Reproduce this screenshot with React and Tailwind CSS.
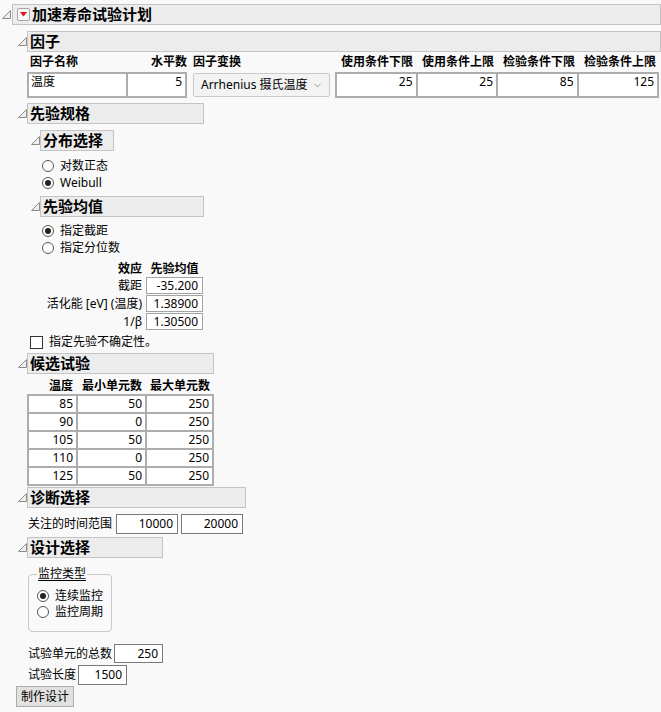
import { ChevronDown } from 'lucide-react'

function Twisty() {
  return (
    <svg width="9" height="9" viewBox="0 0 9 9" className="shrink-0">
      <path d="M8.5 0.5 L8.5 8.5 L0.5 8.5 Z" fill="#eeeeee" stroke="#8c8c8c" strokeWidth="1" strokeLinejoin="round" />
    </svg>
  )
}

function Header({ title, box }) {
  return (
    <div className="flex items-center">
      <Twisty />
      <div className={`h-[21px] ${box} flex items-center border border-[#c4c4c4] bg-[#ececec] pl-[2px] text-[15px] font-bold leading-[19px]`}>
        {title}
      </div>
    </div>
  )
}

function Radio({ checked, label, h = 'h-[17px]' }) {
  return (
    <div className={`flex ${h} items-center gap-[6px]`}>
      <span className="flex h-[12px] w-[12px] items-center justify-center rounded-full border border-[#555] bg-white">
        {checked ? <span className="h-[6px] w-[6px] rounded-full bg-[#222]" /> : null}
      </span>
      <span className="leading-[16px]">{label}</span>
    </div>
  )
}

function Input({ value, className }) {
  return (
    <div className={`flex items-center justify-end bg-white pr-[4px] leading-[16px] ${className}`}>{value}</div>
  )
}

const candidates = [
  [85, 50, 250],
  [90, 0, 250],
  [105, 50, 250],
  [110, 0, 250],
  [125, 50, 250],
]

const limits = [
  ['使用条件下限', 25],
  ['使用条件上限', 25],
  ['检验条件下限', 85],
  ['检验条件上限', 125],
]

export default function App() {
  return (
    <div className="h-[712px] w-[661px] overflow-hidden bg-[#f9f9f9] pt-[4px] font-['Noto_Sans','Noto_Sans_CJK_SC',sans-serif] text-[12px] text-black">
      {/* top outline */}
      <div className="flex items-center pl-[2px]">
        <Twisty />
        <div className="ml-[1px] flex h-[21px] flex-1 items-center border border-[#c4c4c4] bg-[#ececec]">
          <span className="ml-[4px] flex h-[13px] w-[13px] items-center justify-center rounded-[2px] border border-[#a5a5a5] bg-[#f7f7f7]">
            <svg width="7" height="5" viewBox="0 0 7 5">
              <path d="M0 0 L7 0 L3.5 4.5 Z" fill="#e0141e" />
            </svg>
          </span>
          <span className="ml-[2px] text-[15px] font-bold leading-[19px]">加速寿命试验计划</span>
        </div>
      </div>

      <div className="pl-[18px]">
        {/* 因子 */}
        <div className="mt-[6px]">
          <Header title="因子" box="flex-1" />
          <div className="ml-[9px]">
            <div className="flex h-[20px] items-center font-bold leading-[16px]">
              <div className="w-[100px] pl-[3px]">因子名称</div>
              <div className="w-[60px] text-right">水平数</div>
              <div className="w-[6px]" />
              <div className="w-[137px]">因子变换</div>
              <div className="w-[5px]" />
              {limits.map(([t]) => (
                <div key={t} className="w-[81px] text-right pr-[3px]">{t}</div>
              ))}
            </div>
            <div className="flex items-start">
              <div className="flex h-[26px] w-[160px] gap-[2px] bg-[#adadad] p-[2px]">
                <div className="w-[97px] bg-white pl-[2px] leading-[15px]">温度</div>
                <div className="flex-1 bg-white pr-[3px] text-right leading-[15px]">5</div>
              </div>
              <div className="w-[6px]" />
              <div className="mt-[1px] flex h-[24px] w-[137px] items-center justify-between rounded-[2px] border border-[#c9c9c9] bg-[#f3f3f3] pl-[7px] pr-[6px]">
                <span className="leading-[16px]">Arrhenius 摄氏温度</span>
                <ChevronDown size={11} strokeWidth={1.5} color="#777" />
              </div>
              <div className="w-[5px]" />
              <div className="flex h-[26px] w-[324px] gap-[2px] bg-[#adadad] p-[2px]">
                {limits.map(([t, v]) => (
                  <div key={t} className="flex-1 bg-white pr-[3px] text-right leading-[15px]">{v}</div>
                ))}
              </div>
            </div>
          </div>
        </div>

        {/* 先验规格 */}
        <div className="mt-[5px]">
          <Header title="先验规格" box="w-[177px]" />
          <div className="pl-[13px]">
            <div className="mt-[6px]">
              <Header title="分布选择" box="w-[74px]" />
              <div className="mt-[6px] pl-[11px]">
                <Radio label="对数正态" />
                <Radio checked label="Weibull" />
              </div>
            </div>
            <div className="mt-[5px]">
              <Header title="先验均值" box="w-[164px]" />
              <div className="mt-[5px] pl-[11px]">
                <Radio checked label="指定截距" />
                <Radio label="指定分位数" />
              </div>
              <div className="mt-[4px]">
                <div className="flex h-[17px] items-center font-bold leading-[16px]">
                  <div className="w-[111px] text-right">效应</div>
                  <div className="ml-[4px] w-[57px] text-center">先验均值</div>
                </div>
                <div className="flex flex-col gap-[1px]">
                  {[
                    ['截距', '-35.200'],
                    ['活化能 [eV] (温度)', '1.38900'],
                    ['1/β', '1.30500'],
                  ].map(([l, v]) => (
                    <div key={l} className="flex items-center">
                      <div className="w-[111px] text-right leading-[16px]">{l}</div>
                      <Input value={v} className="ml-[4px] h-[17px] w-[57px] border border-[#a3a3a3] pr-[3px]" />
                    </div>
                  ))}
                </div>
              </div>
            </div>
          </div>
          <div className="mt-[4px] flex items-center gap-[6px] pl-[12px]">
            <span className="h-[13px] w-[13px] border border-[#333] bg-white" />
            <span className="leading-[16px]">指定先验不确定性。</span>
          </div>
        </div>

        {/* 候选试验 */}
        <div className="mt-[3px]">
          <Header title="候选试验" box="w-[187px]" />
          <div className="ml-[9px]">
            <div className="mt-[4px] flex h-[16px] items-center font-bold leading-[16px]">
              <div className="w-[49px] pr-[3px] text-right">温度</div>
              <div className="w-[69px] pr-[3px] text-right">最小单元数</div>
              <div className="w-[69px] pr-[4px] text-right">最大单元数</div>
            </div>
            <div className="inline-grid grid-cols-[47px_67px_65px] gap-[2px] bg-[#adadad] p-[2px] align-top">
              {candidates.flat().map((v, i) => (
                <div key={i} className="h-[16px] bg-white pr-[3px] text-right leading-[16px]">{v}</div>
              ))}
            </div>
          </div>
        </div>

        {/* 诊断选择 */}
        <div className="mt-[1px]">
          <Header title="诊断选择" box="w-[219px]" />
          <div className="mt-[6px] flex items-center pl-[10px]">
            <span className="leading-[16px]">关注的时间范围</span>
            <Input value="10000" className="ml-[4px] h-[20px] w-[62px] border border-[#7a7a7a]" />
            <Input value="20000" className="ml-[3px] h-[20px] w-[62px] border border-[#7a7a7a]" />
          </div>
        </div>

        {/* 设计选择 */}
        <div className="mt-[3px]">
          <Header title="设计选择" box="w-[136px]" />
          <fieldset className="ml-[10px] mt-[9px] w-[84px] rounded-[4px] border border-[#c8c8c8] pb-[11px] pl-[8px] pt-[7px]">
            <legend className="px-[1px] leading-[14px] underline underline-offset-[2px]">监控类型</legend>
            <Radio checked label="连续监控" h="h-[16px]" />
            <Radio label="监控周期" h="h-[16px]" />
          </fieldset>
          <div className="mt-[12px] flex items-center pl-[10px]">
            <span className="leading-[16px]">试验单元的总数</span>
            <Input value="250" className="ml-[2px] h-[19px] w-[49px] border border-[#7a7a7a]" />
          </div>
          <div className="mt-[2px] flex items-center pl-[10px]">
            <span className="leading-[16px]">试验长度</span>
            <Input value="1500" className="ml-[2px] h-[20px] w-[49px] border border-[#7a7a7a]" />
          </div>
        </div>
      </div>

      <button className="ml-[16px] mt-[1px] h-[21px] w-[58px] border border-[#adadad] bg-[#e1e1e1] text-center text-[12px] leading-[18px]">
        制作设计
      </button>
    </div>
  )
}
